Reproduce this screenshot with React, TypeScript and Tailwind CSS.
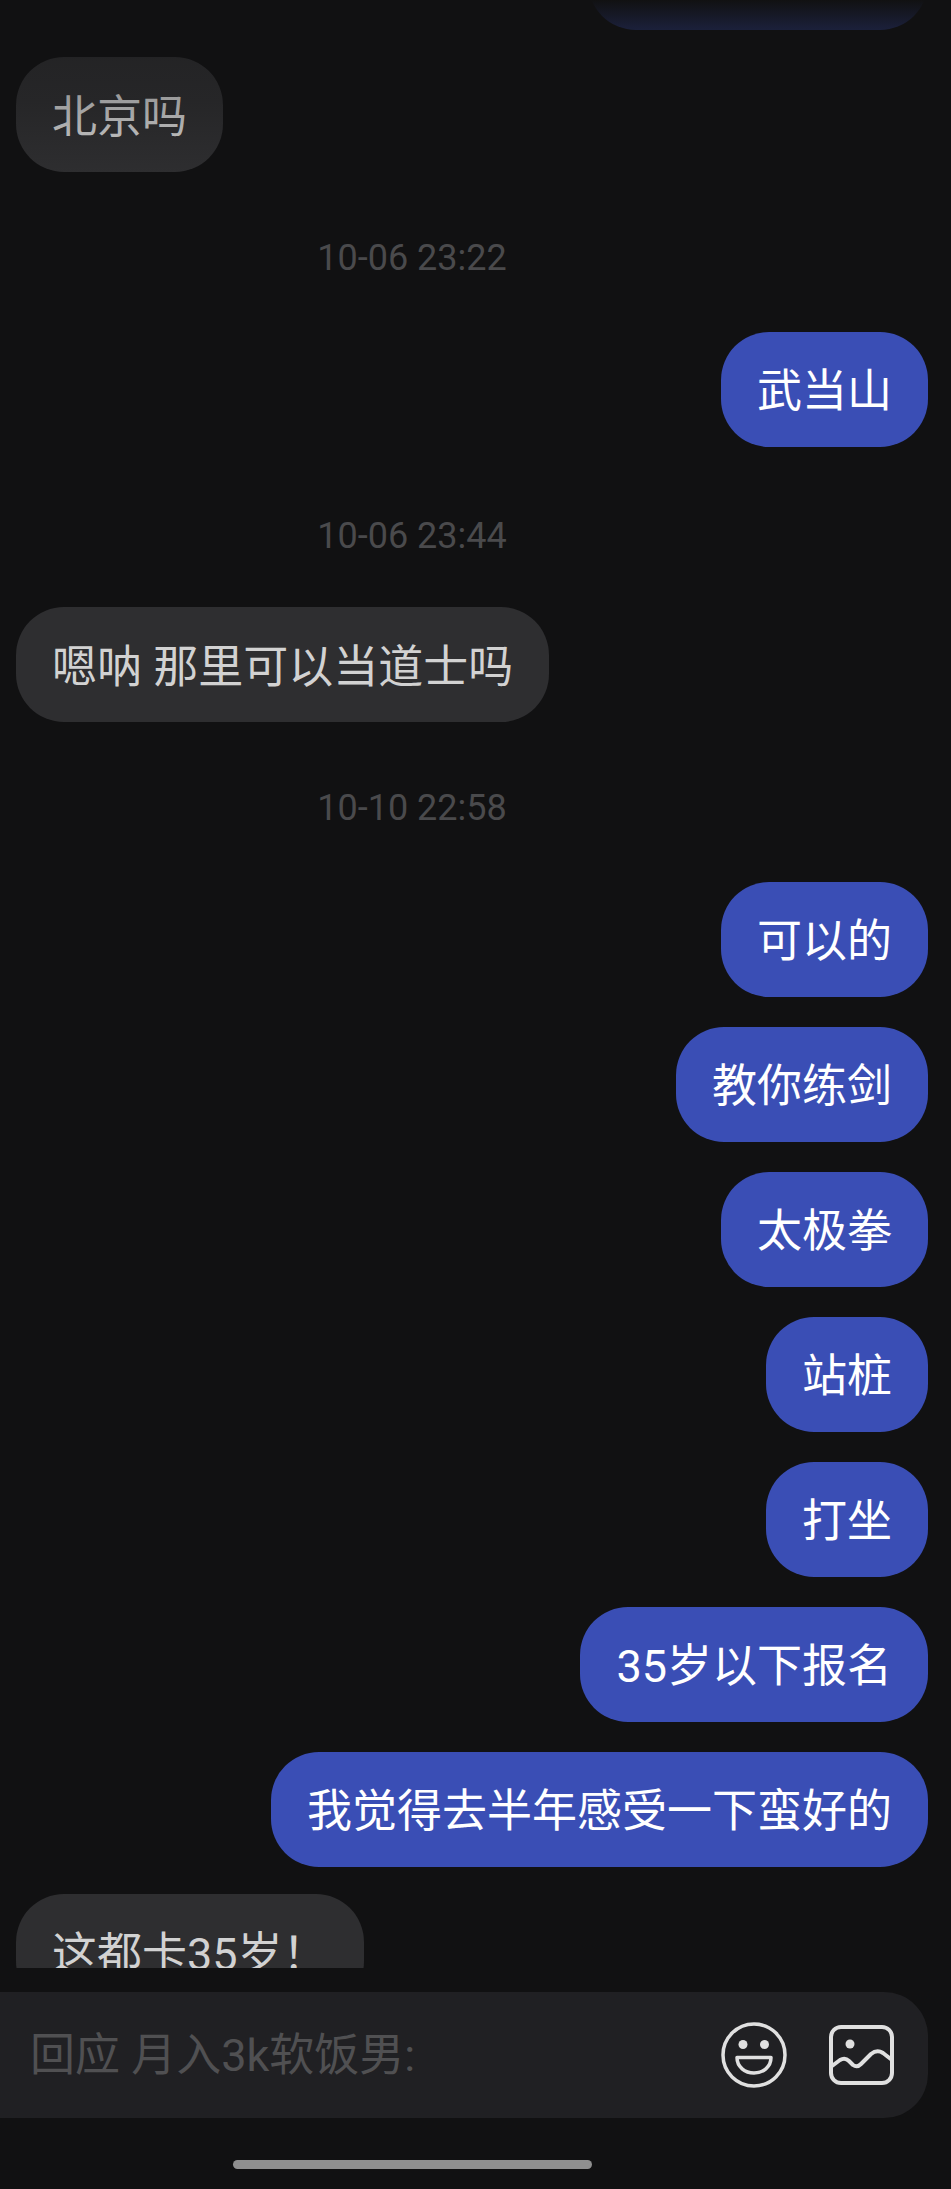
const fontStack = "font-['Roboto','Noto_Sans_CJK_SC',sans-serif]";

function Stamp({ children, className }: { children: string; className: string }) {
  return <div className={`w-[824px] shrink-0 text-center text-[36px] leading-[43px] text-[#4a4a4c] ${className}`}>{children}</div>;
}

function Out({ children }: { children: string }) {
  return (
    <div className="self-end shrink-0 h-[115px] px-9 mr-[23px] pt-[30px] rounded-[48px] bg-[#3a4eb5] text-white text-[45px] leading-[60px]">
      {children}
    </div>
  );
}

function In({ children }: { children: string }) {
  return (
    <div className="self-start shrink-0 h-[115px] px-9 ml-4 pt-[31px] rounded-[48px] bg-[#2e2e30] text-[#d2d2d2] text-[45px] leading-[60px]">
      {children}
    </div>
  );
}

function SmileIcon() {
  return (
    <svg width="66" height="66" viewBox="0 0 66 66" fill="none" stroke="#e0e0e0" strokeWidth="3.5">
      <circle cx="33" cy="33" r="31" />
      <circle cx="22" cy="22.5" r="4.5" fill="#e0e0e0" stroke="none" />
      <circle cx="43.5" cy="22.5" r="4.5" fill="#e0e0e0" stroke="none" />
      <path d="M16 35.5H50C50 45 42 51 33 51C24 51 16 45 16 35.5Z" strokeLinejoin="round" />
    </svg>
  );
}

function PictureIcon() {
  return (
    <svg width="65" height="60" viewBox="0 0 65 60" fill="none" stroke="#e0e0e0" strokeWidth="4">
      <rect x="2" y="2" width="61" height="56" rx="10" />
      <circle cx="21" cy="19" r="4.5" fill="#e0e0e0" stroke="none" />
      <path d="M3 41L11 35Q16 32 20 36L24 40Q28 43 32 39L42 29Q48 24 54 28L63 35" strokeLinejoin="round" strokeLinecap="round" />
    </svg>
  );
}

export default function App() {
  return (
    <div className={`w-[951px] h-[2189px] bg-[#111112] overflow-hidden ${fontStack}`}>
      <div className="relative flex flex-col h-[1968px] overflow-hidden">
        <div className="self-end shrink-0 h-[115px] w-[340px] -mt-[85px] mr-[23px] mb-[27px] rounded-[48px] bg-[#3a4eb5]" />
        <In>北京吗</In>
        <Stamp className="mt-[65px] mb-[52px]">10-06 23:22</Stamp>
        <Out>武当山</Out>
        <Stamp className="mt-[68px] mb-[49px]">10-06 23:44</Stamp>
        <In>嗯呐 那里可以当道士吗</In>
        <Stamp className="mt-[65px] mb-[52px]">10-10 22:58</Stamp>
        <div className="flex flex-col shrink-0 gap-[30px]">
          <Out>可以的</Out>
          <Out>教你练剑</Out>
          <Out>太极拳</Out>
          <Out>站桩</Out>
          <Out>打坐</Out>
          <Out>35岁以下报名</Out>
          <Out>我觉得去半年感受一下蛮好的</Out>
        </div>
        <div className="h-[27px] shrink-0" />
        <In>这都卡35岁！</In>
        {/* fading edge on top of the scrolled list */}
        <div className="absolute top-0 inset-x-0 h-[180px] bg-[linear-gradient(to_bottom,#111112_0px,#111112bf_30px,#11111259_60px,#11111247_100px,#11111200_175px)] pointer-events-none" />
      </div>
      <div className="flex items-center h-[126px] mt-6 mr-[23px] pl-[30px] pr-[34px] pt-[2px] rounded-r-[44px] bg-[#202023]">
        <span className="flex-1 text-[45px] text-[#505052]">回应 月入3k软饭男:</span>
        <div className="flex items-center gap-[42px] -mt-[2px]">
          <SmileIcon />
          <PictureIcon />
        </div>
      </div>
      <div className="w-[824px] flex justify-center mt-[42px]">
        <div className="w-[359px] h-[9px] rounded-full bg-[#8f8f8f]" />
      </div>
    </div>
  );
}
